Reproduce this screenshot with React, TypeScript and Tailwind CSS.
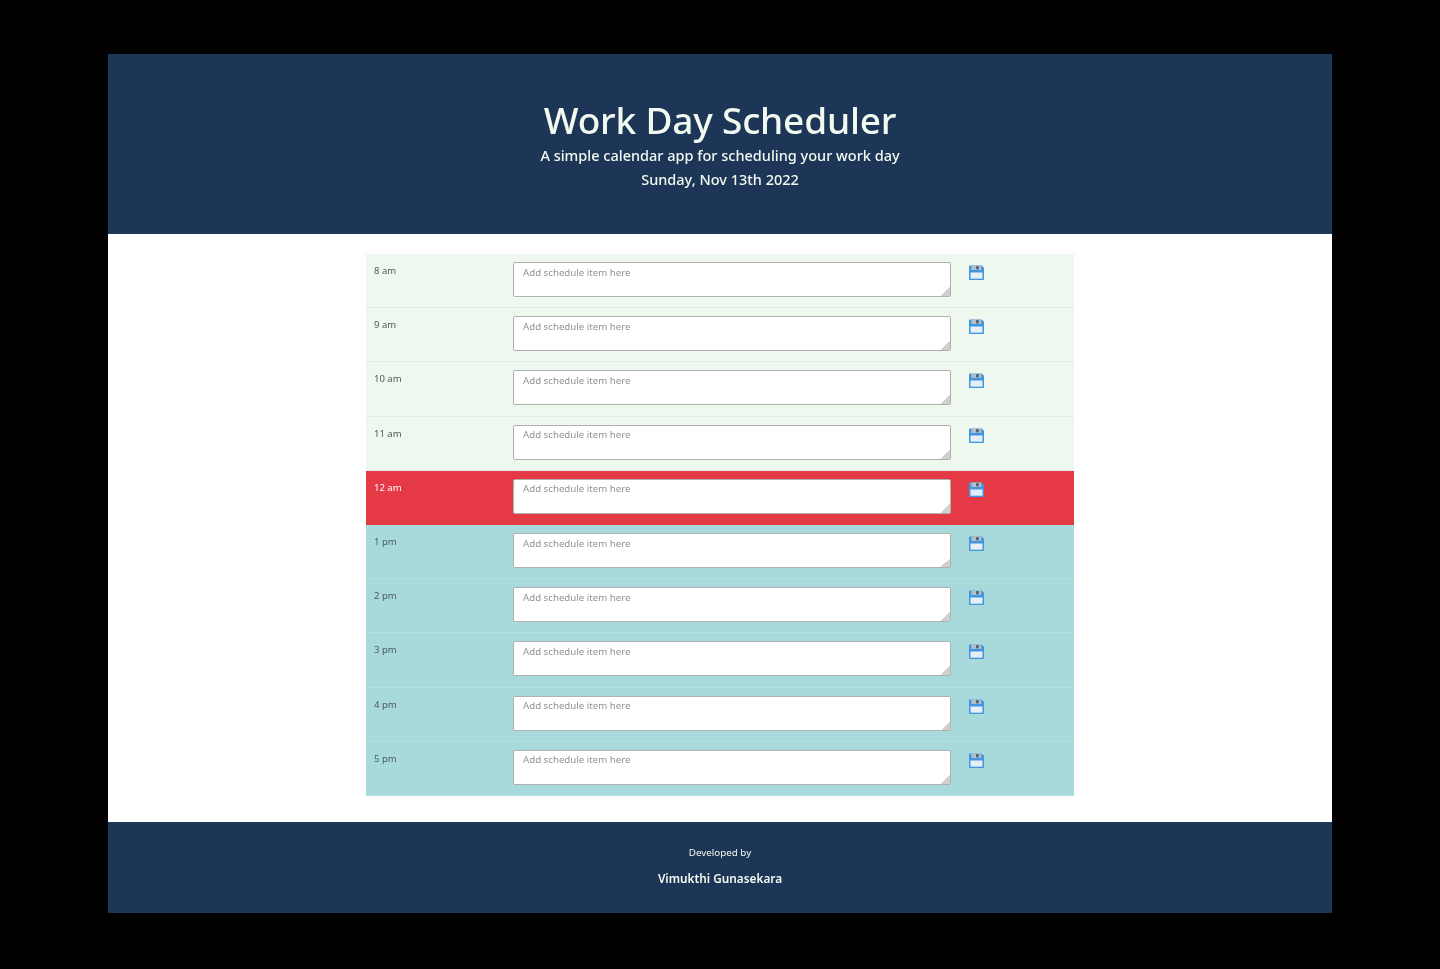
const hours = [
  { label: '8 am', state: 'past' },
  { label: '9 am', state: 'past' },
  { label: '10 am', state: 'past' },
  { label: '11 am', state: 'past' },
  { label: '12 am', state: 'present' },
  { label: '1 pm', state: 'future' },
  { label: '2 pm', state: 'future' },
  { label: '3 pm', state: 'future' },
  { label: '4 pm', state: 'future' },
  { label: '5 pm', state: 'future' },
]

function SaveIcon() {
  return (
    <svg viewBox="0 0 16 16" className="w-[15px] h-[15px] block">
      <path d="M0 1.5 A1 1 0 0 1 1 .5 H13.5 L16 3 V15 A1 1 0 0 1 15 16 H1 A1 1 0 0 1 0 15 Z" fill="#3f97e2" />
      <rect x="2.5" y="0.5" width="10.5" height="4.8" fill="#b3c0cc" />
      <rect x="7.5" y="1.2" width="3" height="3.4" fill="#55636f" />
      <rect x="1.6" y="8" width="12.8" height="6.6" fill="#e6eef7" />
    </svg>
  )
}

function HourRow({ label, state }: { label: string; state: string }) {
  const bg = state === 'past' ? 'bg-[#eff8ef] border-[#e3ece3]' : state === 'present' ? 'bg-[#e63946] border-[#e63946]' : 'bg-[#a8dadc] border-[#b4e0e2]'
  const text = state === 'present' ? 'text-white' : 'text-[#4b5a5a]'

  return (
    <div className={`flex h-[54.2px] items-start border-b ${bg}`}>
      <div className={`w-[147px] pl-2 pt-[10px] text-[9.5px] leading-[14px] ${text}`}>{label}</div>
      <textarea
        placeholder="Add schedule item here"
        className="mt-2 h-[35px] w-[438px] rounded-[2px] border border-[#b0b0b0] bg-white px-[9px] py-[2.6px] text-[9.7px] leading-[14px] placeholder:text-[#929292] [&::-webkit-resizer]:bg-[linear-gradient(135deg,transparent_70%,#d0d0d0_70%)]"
      />
      <button className="ml-[18px] mt-[11px]">
        <SaveIcon />
      </button>
    </div>
  )
}

export default function App() {
  return (
    <div className="min-h-[969px] bg-black px-[108px] pt-[54px] pb-[56px] font-['Noto_Sans',sans-serif] blur-[0.5px]">
      {/* Header */}
      <header className="flex h-[180px] flex-col items-center bg-[#1d3557] pt-[41px] text-center text-[#f1faee]">
        <h1 className="text-[37px] leading-[50px] font-medium tracking-[-0.2px]">Work Day Scheduler</h1>
        <p className="-mt-[1px] text-[14.5px] leading-[22px] font-medium">A simple calendar app for scheduling your work day</p>
        <p className="mt-[2px] text-[14.5px] leading-[22px] font-medium">Sunday, Nov 13th 2022</p>
      </header>

      {/* Planner */}
      <main className="h-[588px] bg-white pt-5">
        <div className="mx-auto w-[708px]">
          {hours.map((h) => (
            <HourRow key={h.label} label={h.label} state={h.state} />
          ))}
        </div>
      </main>

      {/* Footer */}
      <footer className="flex h-[91px] flex-col items-center bg-[#1d3557] pt-[23px] text-[#f1faee]">
        <p className="text-[9.8px] leading-[16px]">Developed by</p>
        <p className="mt-[9px] text-[11.8px] leading-[17px] font-semibold">Vimukthi Gunasekara</p>
      </footer>
    </div>
  )
}
